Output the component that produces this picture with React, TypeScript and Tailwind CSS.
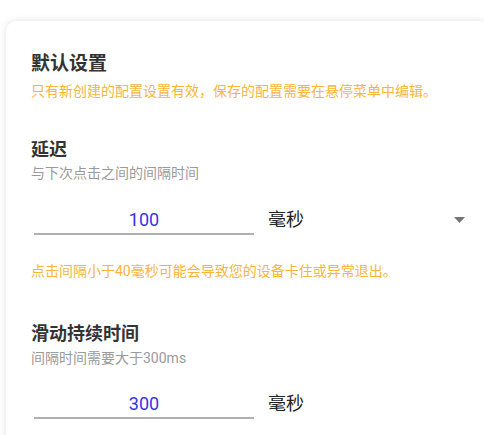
import React from "react";

const font = { fontFamily: "Roboto, 'Noto Sans CJK SC', sans-serif" };

// ── Number input with underline ───────────────────────────────────────────────
function NumberField({ value }: { value: string }) {
  return (
    <div className="ml-[3px] w-[220px] border-b-2 border-[#b0b0b0]">
      <input
        readOnly
        value={value}
        className="w-full bg-transparent text-center text-[18px] leading-[26px] text-[#3535e6] outline-none"
      />
    </div>
  );
}

// ── Unit select ───────────────────────────────────────────────────────────────
function UnitSelect({ arrow }: { arrow?: boolean }) {
  return (
    <div className="ml-[14px] flex w-[203px] items-center justify-between">
      <span className="text-[18px] leading-[26px] text-[#222]">毫秒</span>
      {arrow && (
        <svg width="11" height="6" viewBox="0 0 11 6" className="mr-[6px]">
          <path d="M0 0 H11 L5.5 6 Z" fill="#757575" />
        </svg>
      )}
    </div>
  );
}

export default function App() {
  return (
    <div className="h-[435px] w-[484px] overflow-hidden bg-white pl-[6px] pt-[21px]" style={font}>
      <div className="h-[500px] rounded-tl-[10px] bg-white pl-[25px] pt-[29px] shadow-[0_0_7px_rgba(0,0,0,0.13)]">
        {/* Default settings */}
        <h2 className="text-[19px] font-bold leading-[28px] text-[#333]">默认设置</h2>
        <p className="mt-[3px] text-[14px] leading-[20px] text-[#f9b53a]">
          只有新创建的配置设置有效，保存的配置需要在悬停菜单中编辑。
        </p>

        {/* Delay */}
        <h3 className="mt-[36px] text-[18px] font-bold leading-[26px] text-[#333]">延迟</h3>
        <p className="text-[14px] leading-[20px] text-[#9a9a9a]">与下次点击之间的间隔时间</p>
        <div className="mt-[24px] flex items-start">
          <NumberField value="100" />
          <UnitSelect arrow />
        </div>
        <p className="mt-[26px] text-[14px] leading-[20px] text-[#f9b53a]">
          点击间隔小于40毫秒可能会导致您的设备卡住或异常退出。
        </p>

        {/* Swipe duration */}
        <h3 className="mt-[40px] text-[18px] font-bold leading-[26px] text-[#333]">滑动持续时间</h3>
        <p className="mt-[1px] text-[14px] leading-[20px] text-[#9a9a9a]">间隔时间需要大于300ms</p>
        <div className="mt-[23px] flex items-start">
          <NumberField value="300" />
          <UnitSelect />
        </div>
      </div>
    </div>
  );
}
